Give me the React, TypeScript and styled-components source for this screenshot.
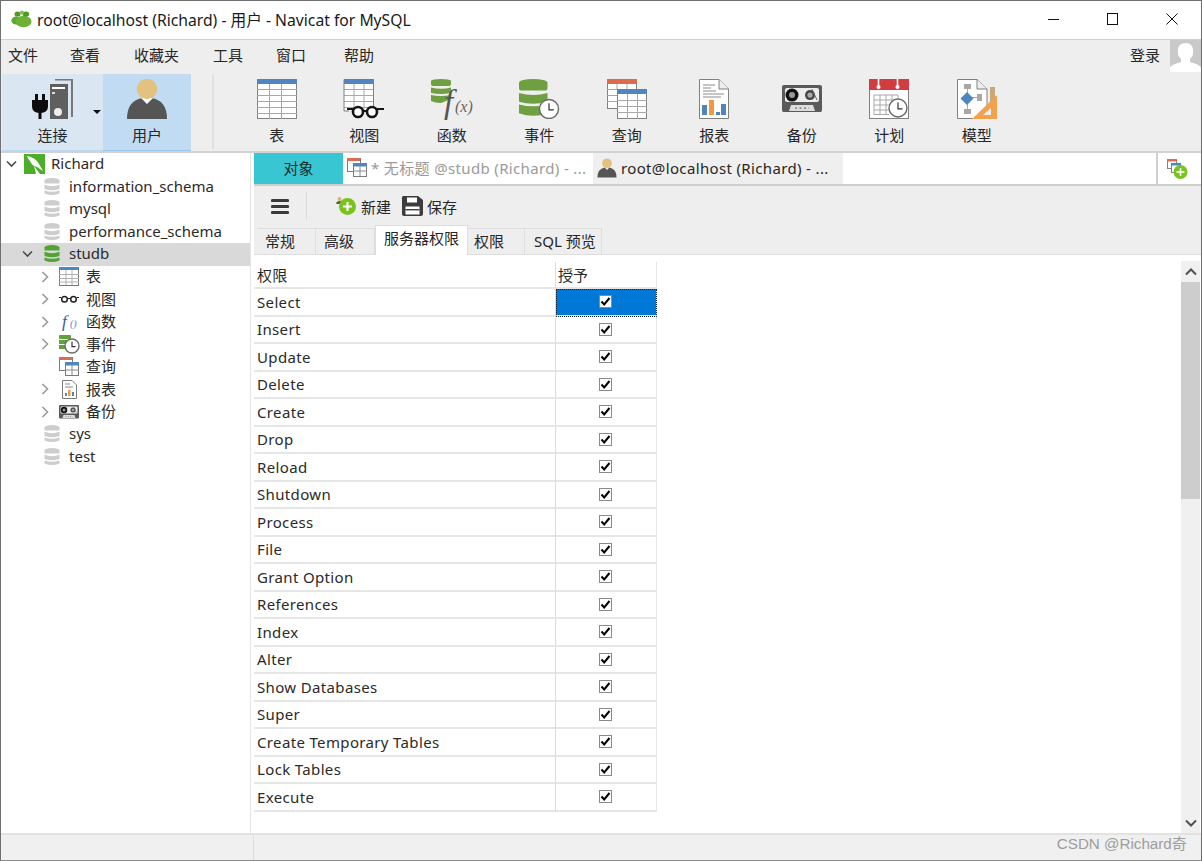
import React from "react";
import styled, { createGlobalStyle } from "styled-components";

const Global = createGlobalStyle`
  html, body { margin: 0; padding: 0; background: #fff; }
  * { box-sizing: border-box; }
  body { font-family: "Noto Sans", "Noto Sans CJK SC", sans-serif; font-size: 15px; color: #262626; }
`;

const Win = styled.div`
  width: 1202px; height: 861px; display: flex; flex-direction: column; overflow: hidden;
  border: 1px solid #6f6f6f; border-bottom-color: #8a8a8a; background: #fff;
`;
const TitleBar = styled.div`
  height: 39px; flex: none; display: flex; align-items: center; padding: 0 0 2px 10px; background: #fff; border-bottom: 1px solid #d0d0d0;
`;
const TitleText = styled.div`font-size: 15.7px; color: #1a1a1a; margin-left: 5px; flex: 1; white-space: nowrap;`;
const WinBtn = styled.button`
  width: 59px; height: 36px; background: none; border: 0; padding: 0; display: flex; align-items: center; justify-content: center;
`;
const MenuBar = styled.div`
  height: 34px; flex: none; background: #eeeeee; display: flex; align-items: flex-start; padding-left: 7px;
`;
const MenuItem = styled.div<{ $after: number }>`
  font-size: 15px; line-height: 30px; margin-right: ${p => p.$after}px; white-space: nowrap;
`;
const LoginWrap = styled.div`margin-left: auto; display: flex; align-items: flex-start;`;
const LoginText = styled.div`font-size: 15px; line-height: 30px; margin-right: 10px;`;
const Avatar = styled.div`
  width: 31px; height: 32px; background: #c9c9c9; overflow: hidden;
`;
const ToolBar = styled.div`
  height: 79px; flex: none; background: #eeeeee; display: flex; padding-left: 1px; border-bottom: 2px solid #d2d2d2;
`;
const ConnBtn = styled.div`
  width: 101px; background: #dae7f3; border-bottom: 1px solid #b9d8f3; display: flex; flex-direction: column; align-items: center; position: relative;
`;
const UserBtn = styled(ConnBtn)`width: 88px; background: #c1dcf2; border-bottom-color: #9cc8ee;`;
const Caret = styled.div`
  position: absolute; left: 91px; top: 36px; width: 0; height: 0;
  border-left: 4px solid transparent; border-right: 4px solid transparent; border-top: 4px solid #111;
`;
const ToolSep = styled.div`width: 2px; height: 74px; background: #e0e0e0; margin: 1px 19px 0 21px;`;
const Tool = styled.div`
  width: 87.5px; flex: none; display: flex; flex-direction: column; align-items: center;
`;
const ToolIcon = styled.div`height: 42px; margin-top: 5px; display: flex; justify-content: center;`;
const ToolLabel = styled.div`font-size: 15px; line-height: 20px; margin-top: 4px; color: #262626;`;
const Main = styled.div`flex: 1; display: flex; min-height: 0;`;
const Sidebar = styled.div`
  width: 250px; flex: none; background: #fff; border-right: 1px solid #e4e4e4;
`;
const TreeRow = styled.div<{ $indent: number; $sel?: boolean }>`
  height: 22.5px; display: flex; align-items: center; padding-left: ${p => p.$indent}px;
  background: ${p => (p.$sel ? "#d9d9d9" : "transparent")}; white-space: nowrap;
`;
const Chevron = styled.div<{ $after: number }>`
  width: 15px; flex: none; display: flex; align-items: center; justify-content: center; margin-right: ${p => p.$after}px;
`;
const TreeIcon = styled.div`width: 22px; flex: none; display: flex; align-items: center; justify-content: center;`;
const TreeText = styled.div`font-size: 15px; margin-left: 6px; margin-top: -2px; color: #2a2a2a;`;
const Content = styled.div`flex: 1; min-width: 0; display: flex; flex-direction: column; padding-left: 3px; background: #fff;`;
const DocTabs = styled.div`
  height: 33px; flex: none; display: flex; background: #fff; border-bottom: 2px solid #cfcfcf;
`;
const ObjTab = styled.div`
  width: 89px; background: #38c7d2; display: flex; align-items: center; justify-content: center; font-size: 15px; color: #1c2a2c; padding-bottom: 2px;
`;
const DocTab = styled.div<{ $active?: boolean }>`
  width: 250px; flex: none; display: flex; align-items: center; padding: 0 0 2px 4px; white-space: nowrap; overflow: hidden;
  background: ${p => (p.$active ? "#efefef" : "#fff")}; color: ${p => (p.$active ? "#262626" : "#9a9a9a")}; font-size: 15px;
`;
const DocTabText = styled.span`margin-left: 4px; letter-spacing: 0.35px;`;
const DocFill = styled.div`flex: 1;`;
const DocAdd = styled.div`width: 45px; border-left: 2px solid #cfcfcf; display: flex; align-items: center; justify-content: center; padding-right: 5px;`;
const ObjBar = styled.div`
  height: 40px; flex: none; background: #eeeeee; display: flex; align-items: center; padding-left: 17px;
`;
const ObjSep = styled.div`width: 1px; height: 28px; background: #dcdcdc; margin: 0 29px 0 17px;`;
const ObjAction = styled.div<{ $after: number }>`
  display: flex; align-items: center; gap: 4px; font-size: 15px; margin-right: ${p => p.$after}px;
`;
const SubTabs = styled.div`
  height: 29px; flex: none; background: #eeeeee; display: flex; align-items: flex-end; padding-left: 4px; border-bottom: 1px solid #dedede;
`;
const SubTab = styled.div<{ $w: number; $active?: boolean; $pad: number }>`
  width: ${p => p.$w}px; height: ${p => (p.$active ? 30 : 26)}px; flex: none; white-space: nowrap; font-size: 15px;
  display: flex; align-items: center; padding-left: ${p => p.$pad}px;
  border: 1px solid #dedede; border-bottom: 0; border-left-width: ${p => (p.$active ? 1 : 0)}px;
  background: ${p => (p.$active ? "#fff" : "#eeeeee")};
  margin-bottom: ${p => (p.$active ? -1 : 0)}px; position: relative;
  padding-bottom: ${p => (p.$active ? 6 : 2)}px;
`;
const Body = styled.div`flex: 1; min-height: 0; display: flex; background: #fff;`;
const TableWrap = styled.div`flex: 1; padding-top: 6.5px;`;
const Grid = styled.div`display: grid; grid-template-columns: 302px 101px; grid-auto-rows: 27.5px;`;
const NameCell = styled.div`
  display: flex; align-items: center; padding-left: 3px; font-size: 15px; color: #2a2a2a; letter-spacing: 0.35px;
  border-bottom: 2px solid #e6e6e6; border-right: 1px solid #dcdcdc;
`;
const GrantCell = styled.div<{ $sel?: boolean }>`
  display: flex; align-items: center; justify-content: center; font-size: 15px; color: #2a2a2a; padding-right: 2px;
  border-bottom: 2px solid #e6e6e6; border-right: 1px solid #e6e6e6;
  background: ${p => (p.$sel ? "#0078d7" : "#fff")};
  outline: ${p => (p.$sel ? "1px dotted #10263a" : "none")}; outline-offset: -1px;
`;
const HeadGrant = styled(GrantCell)`justify-content: flex-start; padding-left: 2px;`;
const Check = styled.div`
  width: 13px; height: 13px; background: #fff; border: 1px solid #8a8a8a; display: flex; align-items: center; justify-content: center;
`;
const Scroll = styled.div`
  width: 19px; flex: none; background: #f0f0f0; margin: 6px 1px 0 0; display: flex; flex-direction: column; align-items: center;
`;
const ScrollBtn = styled.div`height: 21px; flex: none; display: flex; align-items: center; justify-content: center;`;
const Thumb = styled.div`width: 100%; height: 217px; background: #cdcdcd; flex: none;`;
const ScrollFill = styled.div`flex: 1;`;
const Status = styled.div`
  height: 27px; flex: none; background: #f0f0f0; border-top: 2px solid #e2e2e2; display: flex; align-items: flex-start; padding-right: 14px;
`;
const StatusLeft = styled.div`width: 253px; height: 100%; border-right: 1px solid #dcdcdc;`;
const Watermark = styled.div`margin-left: auto; font-family: "Liberation Sans", "Noto Sans CJK SC", sans-serif; font-size: 15.2px; line-height: 18px; color: #9d9d9d;`;

const Leaf = () => (
  <svg width="21" height="20" viewBox="0 0 21 20">
    <ellipse cx="5" cy="11.5" rx="4.6" ry="4" fill="#5fa52e" />
    <ellipse cx="12.5" cy="12.5" rx="8" ry="5.8" fill="#6cb233" />
    <ellipse cx="6.5" cy="5" rx="3" ry="2.6" fill="#4f9a26" />
    <ellipse cx="15" cy="5" rx="3.2" ry="2.6" fill="#4f9a26" />
    <ellipse cx="11" cy="3.5" rx="2" ry="2" fill="#7cc043" />
  </svg>
);
const TableIcon = () => (
  <svg width="40" height="40" viewBox="0 0 40 40">
    <rect x="0.5" y="0.5" width="39" height="39" fill="#fff" stroke="#808080" />
    <rect width="40" height="5" fill="#4f86bf" />
    <path d="M0 10.5H40M0 16.5H40M0 22.5H40M0 28.5H40M0 34.5H40M12.5 5V40M24.5 5V40" stroke="#a8a8a8" />
  </svg>
);
const ViewIcon = () => (
  <svg width="42" height="40" viewBox="0 0 42 40">
    <rect x="1" y="3" width="29" height="28" fill="#fff" />
    <rect x="1" width="30" height="5" fill="#4f86bf" />
    <path d="M1 10.5H30M1 16.5H30M1 22.5H30M1 28.5H30M11 5V31M21 5V31" stroke="#a8a8a8" />
    <path d="M30.5 0V27M1 .5V32H6" stroke="#808080" fill="none" />
    <circle cx="15" cy="33" r="5" fill="#fff" stroke="#151515" strokeWidth="2.6" />
    <circle cx="29" cy="33" r="5" fill="#fff" stroke="#151515" strokeWidth="2.6" />
    <path d="M4 30H10M34 30H41M20 32H24" stroke="#151515" strokeWidth="2" />
  </svg>
);
const DbStackInner = () => (
  <g>
    <rect y="1" width="20" height="6" rx="2" fill="#6ea042" />
    <ellipse cx="10" cy="2" rx="10" ry="2" fill="#6ea042" />
    <path d="M0 8.5Q10 11 20 8.5V14Q10 16 0 14Z" fill="#6ea042" />
    <path d="M0 16Q10 18 20 16V20L10 24Q4 24 0 22Z" fill="#6ea042" />
  </g>
);
const FuncSvg = styled.svg`overflow: visible;`;
const FuncIcon = () => (
  <FuncSvg width="42" height="40" viewBox="0 0 42 40">
    <DbStackInner />
    <text x="13" y="34" fontFamily="Liberation Serif, serif" fontStyle="italic" fontSize="33" fill="#555">f</text>
    <text x="24" y="33" fontFamily="Liberation Serif, serif" fontStyle="italic" fontSize="16" fill="#666">(x)</text>
  </FuncSvg>
);
const Clock = ({ x, y, r }: { x: number; y: number; r: number }) => (
  <g>
    <circle cx={x} cy={y} r={r} fill="#fff" stroke="#6a6a6a" strokeWidth="1.4" />
    <path d={`M${x} ${y - r * 0.6}V${y + r * 0.1}H${x + r * 0.5}`} stroke="#333" strokeWidth="1.2" fill="none" />
  </g>
);
const DbStack3 = () => (
  <g>
    <rect y="2" width="30" height="7" rx="2" fill="#6ea042" />
    <ellipse cx="15" cy="3" rx="15" ry="3" fill="#6ea042" />
    <path d="M0 11Q15 14 30 11V18Q15 21 0 18Z" fill="#6ea042" />
    <path d="M0 20Q15 23 30 20V27Q15 31 0 27Z" fill="#6ea042" />
  </g>
);
const EventIcon = () => (
  <svg width="44" height="40" viewBox="0 0 44 40">
    <g transform="translate(2 0) scale(0.95 1.27)"><DbStack3 /></g>
    <Clock x={32} y={30} r={9.5} />
  </svg>
);
const QueryIcon = () => (
  <svg width="40" height="40" viewBox="0 0 40 40">
    <rect x="0.5" y="0.5" width="29" height="29" fill="#fff" stroke="#808080" />
    <rect width="30" height="5" fill="#dd6b4d" />
    <path d="M0 10.5H10M0 16.5H10M0 22.5H10M10 5V10M20 5V10M10 10.5H30" stroke="#a8a8a8" />
    <rect x="10.5" y="10.5" width="29" height="29" fill="#fff" stroke="#808080" />
    <rect x="10" y="10" width="30" height="5" fill="#4f86bf" />
    <path d="M10 21.5H40M10 27.5H40M10 33.5H40M20.5 15V40M30.5 15V40" stroke="#a8a8a8" />
  </svg>
);
const ReportIcon = () => (
  <svg width="30" height="40" viewBox="0 0 30 40">
    <path d="M.5.5H20L29.5 10V39.5H.5Z" fill="#fff" stroke="#808080" />
    <path d="M20 .5V10H29.5" fill="#eee" stroke="#808080" />
    <path d="M4 6H16M4 9H12M4 12H17M4 15H25M4 18H22" stroke="#8a8a8a" />
    <rect x="3" y="26" width="5" height="10" fill="#4f86bf" />
    <rect x="10" y="21" width="5" height="15" fill="#f09a3c" />
    <rect x="17" y="33" width="4" height="3" fill="#4f86bf" />
    <rect x="22" y="25" width="5" height="11" fill="#4f86bf" />
  </svg>
);
const TapeIcon = ({ s = 40 }: { s?: number }) => (
  <svg width={s} height={s * 0.68} viewBox="0 0 40 27">
    <path d="M2 0H38Q40 0 40 2V25Q40 27 38 27H2Q0 27 0 25V2Q0 0 2 0Z" fill="#5a5a5a" />
    <rect x="3" y="3" width="34" height="14" rx="2" fill="#ececec" />
    <circle cx="10" cy="10" r="6.5" fill="#111" />
    <circle cx="10" cy="10" r="3" fill="#999" />
    <circle cx="28" cy="10" r="5" fill="#444" />
    <circle cx="28" cy="10" r="2.6" fill="#aaa" />
    <path d="M30 4L35 15" stroke="#666" />
    <path d="M7 26L9 20H31L33 26Z" fill="#ddd" />
    <path d="M13 23H27" stroke="#555" strokeDasharray="2 2.5" />
  </svg>
);
const CalendarIcon = () => (
  <svg width="40" height="40" viewBox="0 0 40 40">
    <rect x="0.5" y="0.5" width="39" height="39" fill="#fff" stroke="#808080" />
    <rect width="40" height="11" fill="#d13c40" />
    <path d="M9.5 0V8M28.5 0V8" stroke="#fff" strokeWidth="1.6" />
    <circle cx="9.5" cy="8" r="2" fill="#fff" />
    <circle cx="28.5" cy="8" r="2" fill="#fff" />
    <path d="M5 16H29M5 21H25M5 26H22M5 31H21M5 35.5H20M5 16V36M11 16V36M17 16V36M23 16V22M29 16V21" stroke="#a8a8a8" fill="none" />
    <Clock x={29} y={29} r={9} />
  </svg>
);
const ModelIcon = () => (
  <svg width="40" height="40" viewBox="0 0 40 40">
    <path d="M.5.5H20L30 10V39.5H.5Z" fill="#fff" stroke="#808080" />
    <path d="M20 .5V10H30" fill="#eee" stroke="#808080" />
    <rect x="33" y="8" width="5" height="16" fill="#c8a878" />
    <rect x="7" y="5" width="7" height="5" fill="#a8a8a8" />
    <rect x="7" y="30" width="7" height="5" fill="#a8a8a8" />
    <rect x="20" y="15" width="5" height="7" fill="#a8a8a8" />
    <path d="M10.5 10V30M14 18.5H20" stroke="#a8a8a8" />
    <path d="M10 13L16.5 19.5L10 26L3.5 19.5Z" fill="#4f86bf" />
    <path d="M40 16V40H15Z" fill="#f5a04a" />
    <path d="M34 29V36H26Z" fill="#eee" />
  </svg>
);
const Plug = () => (
  <svg width="42" height="41" viewBox="0 0 42 41">
    <path d="M23 .5H40V38" stroke="#777" strokeWidth="2" fill="none" />
    <rect x="18" y="5" width="18" height="35" fill="#5f5f5f" />
    <rect x="20" y="8" width="13" height="2" fill="#fff" />
    <rect x="20" y="13" width="3" height="2" fill="#ddd" />
    <circle cx="26" cy="33" r="4" fill="#eee" />
    <path d="M0 21H16V28Q16 31 13 33L9.5 34V40H6.5V34L3 33Q0 31 0 28ZM3 15H6V21H3ZM10 15H13V21H10Z" fill="#0d0d0d" />
  </svg>
);
const Person = () => (
  <svg width="42" height="40" viewBox="0 0 42 40">
    <path d="M1 40Q1 22 16 19L21 24L26 19Q41 22 41 40Z" fill="#555" />
    <path d="M15 19H27L21 25Z" fill="#fff" />
    <circle cx="21" cy="10" r="10.2" fill="#e3c17f" />
  </svg>
);
const SmallPerson = ({ s = 20 }: { s?: number }) => (
  <svg width={s} height={s} viewBox="0 0 42 40">
    <path d="M1 40Q1 22 16 19L21 24L26 19Q41 22 41 40Z" fill="#555" />
    <circle cx="21" cy="10" r="10.2" fill="#e3c17f" />
  </svg>
);
const Db = ({ on }: { on?: boolean }) => {
  const c = on ? "#52a335" : "#cdcdcd";
  return (
    <svg width="16" height="18" viewBox="0 0 16 18">
      <ellipse cx="8" cy="2.5" rx="7.5" ry="2.5" fill={c} />
      <rect x="0.5" y="2.5" width="15" height="3" fill={c} />
      <path d="M.5 6.8Q8 9.5 15.5 6.8V11Q8 13.5 .5 11Z" fill={c} />
      <path d="M.5 12.4Q8 15 15.5 12.4V15.5Q8 18.5 .5 15.5Z" fill={c} />
    </svg>
  );
};
const ChevDown = () => (
  <svg width="11" height="8" viewBox="0 0 11 8"><path d="M1 1.5L5.5 6L10 1.5" stroke="#4a4a4a" strokeWidth="1.6" fill="none" /></svg>
);
const ChevRight = () => (
  <svg width="8" height="12" viewBox="0 0 8 12"><path d="M1.5 1L6.5 6L1.5 11" stroke="#9a9a9a" strokeWidth="1.6" fill="none" /></svg>
);
const MysqlLogo = () => (
  <svg width="21" height="20" viewBox="0 0 21 20">
    <rect width="21" height="20" fill="#4cae2a" />
    <path d="M3 2Q11 3 15 10L19 17L13 13Q8 12 6 7Q4 5 3 2Z" fill="#fff" />
    <path d="M10 12L16 20H12Z" fill="#fff" />
  </svg>
);
const TinyTable = () => (
  <svg width="20" height="19" viewBox="0 0 20 19">
    <rect x=".5" y=".5" width="19" height="18" fill="#fff" stroke="#7a7a7a" />
    <rect width="20" height="3" fill="#4f86bf" />
    <path d="M0 7.5H20M0 11.5H20M0 15H20M7 3V18M13 3V18" stroke="#b0b0b0" />
  </svg>
);
const TinyGlasses = () => (
  <svg width="20" height="8" viewBox="0 0 20 8">
    <circle cx="5.5" cy="4.2" r="2.8" fill="none" stroke="#222" strokeWidth="1.5" />
    <circle cx="14.5" cy="4.2" r="2.8" fill="none" stroke="#222" strokeWidth="1.5" />
    <path d="M0 2.5H2M8 3.5H12M18 2.5H20" stroke="#222" />
  </svg>
);
const TinyFunc = () => (
  <svg width="20" height="20" viewBox="0 0 20 20">
    <text x="3" y="15" fontFamily="Liberation Serif, serif" fontStyle="italic" fontSize="17" fill="#2f5f9a">f</text>
    <text x="11" y="15" fontFamily="Liberation Serif, serif" fontStyle="italic" fontSize="10" fill="#4f86bf">()</text>
  </svg>
);
const TinyEvent = () => (
  <svg width="21" height="20" viewBox="0 0 21 20">
    <rect y="1" width="12" height="4" rx="1" fill="#5ea33a" />
    <rect y="6" width="12" height="4" fill="#5ea33a" />
    <rect y="11" width="10" height="4" fill="#5ea33a" />
    <Clock x={13} y={12} r={7} />
  </svg>
);
const TinyQuery = () => (
  <svg width="20" height="19" viewBox="0 0 20 19">
    <rect x=".5" y=".5" width="13" height="13" fill="#fff" stroke="#7a7a7a" />
    <rect width="13" height="3" fill="#dd6b4d" />
    <rect x="6.5" y="5.5" width="13" height="13" fill="#fff" stroke="#7a7a7a" />
    <rect x="6" y="5" width="14" height="3.5" fill="#4f86bf" />
    <path d="M6 13H20M13 8V18" stroke="#8a8a8a" />
  </svg>
);
const TinyReport = () => (
  <svg width="15" height="19" viewBox="0 0 15 19">
    <path d="M.5.5H10L14.5 5V18.5H.5Z" fill="#fff" stroke="#7a7a7a" />
    <path d="M3 4H8M3 7H11" stroke="#888" />
    <rect x="3" y="13" width="2" height="3" fill="#4f86bf" />
    <rect x="6" y="10" width="2.5" height="6" fill="#f09a3c" />
    <rect x="10" y="12" width="2" height="4" fill="#4f86bf" />
  </svg>
);
const NewIcon = () => (
  <svg width="21" height="20" viewBox="0 0 21 20">
    <circle cx="3.5" cy="3" r="2" fill="#d9b777" />
    <path d="M0 7Q1 4.5 6 5V8H1Z" fill="#555" />
    <circle cx="11.5" cy="10.5" r="8.5" fill="#7ac31c" />
    <path d="M11.5 6V15M7 10.5H16" stroke="#fff" strokeWidth="2.2" />
  </svg>
);
const SaveIcon = () => (
  <svg width="21" height="20" viewBox="0 0 21 20">
    <path d="M1 0H16L21 4V18Q21 20 19 20H2Q0 20 0 18V1Z" fill="#3c3c3c" />
    <rect x="5" y="1.5" width="10" height="5" fill="#fff" />
    <rect x="3.5" y="10.5" width="14" height="8" fill="#fff" />
    <rect x="3.5" y="13" width="14" height="1.4" fill="#3c3c3c" />
  </svg>
);
const AddTabs = () => (
  <svg width="21" height="20" viewBox="0 0 21 20">
    <rect x=".5" y=".5" width="9" height="9" fill="#fff" stroke="#808080" />
    <rect width="10" height="2.5" fill="#dd6b4d" />
    <rect x="4.5" y="4.5" width="9" height="9" fill="#fff" stroke="#808080" />
    <rect x="4" y="4" width="10" height="2.5" fill="#4f86bf" />
    <circle cx="13.5" cy="13" r="7" fill="#7ac31c" />
    <path d="M13.5 9V17M9.5 13H17.5" stroke="#fff" strokeWidth="1.6" />
  </svg>
);
const Silhouette = () => (
  <svg width="31" height="32" viewBox="0 0 31 32">
    <path d="M0 32V28Q0 25 11 22V19Q7 16 8 9Q9 3 15.5 3Q22 3 23 9Q24 16 20 19V22Q31 25 31 28V32Z" fill="#fff" />
  </svg>
);

const TapeOffset = styled.div`padding-top: 6px;`;
function TapeIconBox() {
  return <TapeOffset><TapeIcon /></TapeOffset>;
}
const tools: [string, React.ReactNode][] = [
  ["表", <TableIcon />], ["视图", <ViewIcon />], ["函数", <FuncIcon />], ["事件", <EventIcon />],
  ["查询", <QueryIcon />], ["报表", <ReportIcon />], ["备份", <TapeIconBox />], ["计划", <CalendarIcon />], ["模型", <ModelIcon />],
];

const menus: [string, number][] = [["文件", 32], ["查看", 34], ["收藏夹", 34], ["工具", 33], ["窗口", 38], ["帮助", 0]];
const privs = ["Select", "Insert", "Update", "Delete", "Create", "Drop", "Reload", "Shutdown", "Process", "File", "Grant Option", "References", "Index", "Alter", "Show Databases", "Super", "Create Temporary Tables", "Lock Tables", "Execute"];
const subTabs: [string, number, number, boolean?][] = [["常规", 58, 7], ["高级", 59, 8], ["服务器权限", 93, 8, true], ["权限", 57, 6], ["SQL 预览", 77, 9]];
const children: [string, React.ReactNode, boolean][] = [
  ["表", <TinyTable />, true], ["视图", <TinyGlasses />, true], ["函数", <TinyFunc />, true], ["事件", <TinyEvent />, true],
  ["查询", <TinyQuery />, false], ["报表", <TinyReport />, true], ["备份", <TapeIcon s={20} />, true],
];

const Tick = () => (
  <Check><svg width="11" height="11" viewBox="0 0 11 11"><path d="M1.5 5.5L4.2 8.5L9.5 2" stroke="#000" strokeWidth="2" fill="none" /></svg></Check>
);

export default function App() {
  return (
    <Win>
      <Global />
      <TitleBar>
        <Leaf />
        <TitleText>root@localhost (Richard) - 用户 - Navicat for MySQL</TitleText>
        <WinBtn aria-label="min"><svg width="11" height="11" viewBox="0 0 11 11"><path d="M0 5.5H11" stroke="#111" /></svg></WinBtn>
        <WinBtn aria-label="max"><svg width="11" height="12" viewBox="0 0 11 12"><rect x=".5" y=".5" width="10" height="11" fill="none" stroke="#111" /></svg></WinBtn>
        <WinBtn aria-label="close"><svg width="12" height="12" viewBox="0 0 12 12"><path d="M.5.5L11.5 11.5M11.5.5L.5 11.5" stroke="#111" /></svg></WinBtn>
      </TitleBar>
      <MenuBar>
        {menus.map(([m, a]) => <MenuItem key={m} $after={a}>{m}</MenuItem>)}
        <LoginWrap>
          <LoginText>登录</LoginText>
          <Avatar><Silhouette /></Avatar>
        </LoginWrap>
      </MenuBar>
      <ToolBar>
        <ConnBtn>
          <ToolIcon><Plug /></ToolIcon>
          <ToolLabel>连接</ToolLabel>
          <Caret />
        </ConnBtn>
        <UserBtn>
          <ToolIcon><Person /></ToolIcon>
          <ToolLabel>用户</ToolLabel>
        </UserBtn>
        <ToolSep />
        {tools.map(([l, i]) => (
          <Tool key={l}><ToolIcon>{i}</ToolIcon><ToolLabel>{l}</ToolLabel></Tool>
        ))}
      </ToolBar>
      <Main>
        <Sidebar>
          <TreeRow $indent={3}><Chevron $after={4}><ChevDown /></Chevron><TreeIcon><MysqlLogo /></TreeIcon><TreeText>Richard</TreeText></TreeRow>
          {["information_schema", "mysql", "performance_schema"].map(n => (
            <TreeRow key={n} $indent={40}><TreeIcon><Db /></TreeIcon><TreeText>{n}</TreeText></TreeRow>
          ))}
          <TreeRow $indent={19} $sel><Chevron $after={6}><ChevDown /></Chevron><TreeIcon><Db on /></TreeIcon><TreeText>studb</TreeText></TreeRow>
          {children.map(([n, icon, hasChev]) => (
            <TreeRow key={n} $indent={hasChev ? 36 : 57}>
              {hasChev && <Chevron $after={6}><ChevRight /></Chevron>}
              <TreeIcon>{icon}</TreeIcon>
              <TreeText>{n}</TreeText>
            </TreeRow>
          ))}
          {["sys", "test"].map(n => (
            <TreeRow key={n} $indent={40}><TreeIcon><Db /></TreeIcon><TreeText>{n}</TreeText></TreeRow>
          ))}
        </Sidebar>
        <Content>
          <DocTabs>
            <ObjTab>对象</ObjTab>
            <DocTab><TinyQuery /><DocTabText>* 无标题 @studb (Richard) - ...</DocTabText></DocTab>
            <DocTab $active><SmallPerson /><DocTabText>root@localhost (Richard) - ...</DocTabText></DocTab>
            <DocFill />
            <DocAdd><AddTabs /></DocAdd>
          </DocTabs>
          <ObjBar>
            <svg width="18" height="17" viewBox="0 0 18 17"><path d="M1.5 2.5H16.5M1.5 8.5H16.5M1.5 14.5H16.5" stroke="#3a3a3a" strokeWidth="3.2" strokeLinecap="round" /></svg>
            <ObjSep />
            <ObjAction $after={11}><NewIcon />新建</ObjAction>
            <ObjAction $after={0}><SaveIcon />保存</ObjAction>
          </ObjBar>
          <SubTabs>
            {subTabs.map(([t, w, pad, a]) => <SubTab key={t} $w={w} $pad={pad} $active={a}>{t}</SubTab>)}
          </SubTabs>
          <Body>
            <TableWrap>
              <Grid>
                <NameCell>权限</NameCell>
                <HeadGrant>授予</HeadGrant>
                {privs.map((p, i) => (
                  <React.Fragment key={p}>
                    <NameCell>{p}</NameCell>
                    <GrantCell $sel={i === 0}><Tick /></GrantCell>
                  </React.Fragment>
                ))}
              </Grid>
            </TableWrap>
            <Scroll>
              <ScrollBtn><svg width="12" height="8" viewBox="0 0 12 8"><path d="M1 6.5L6 1.5L11 6.5" stroke="#505050" strokeWidth="2" fill="none" /></svg></ScrollBtn>
              <Thumb />
              <ScrollFill />
              <ScrollBtn><svg width="12" height="8" viewBox="0 0 12 8"><path d="M1 1.5L6 6.5L11 1.5" stroke="#505050" strokeWidth="2" fill="none" /></svg></ScrollBtn>
            </Scroll>
          </Body>
        </Content>
      </Main>
      <Status>
        <StatusLeft />
        <Watermark>CSDN @Richard奇</Watermark>
      </Status>
    </Win>
  );
}
